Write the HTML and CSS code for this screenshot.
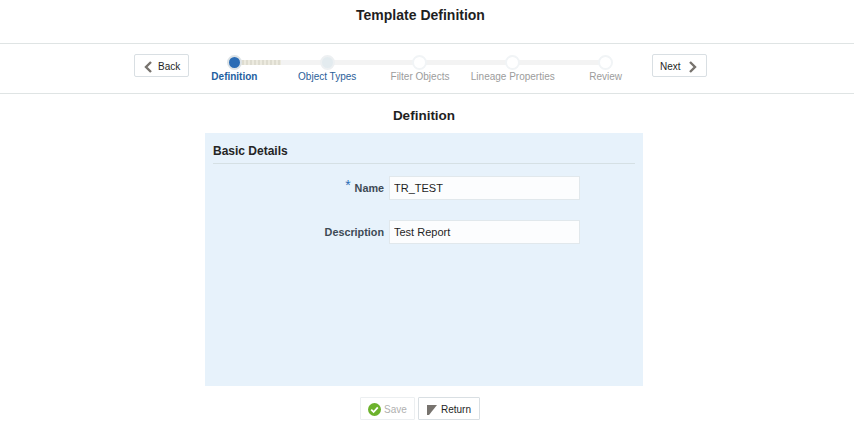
FILE: index.html
```html
<!DOCTYPE html>
<html lang="en">
<head>
    <meta charset="UTF-8">
    <title>Template Definition</title>
    <link rel="stylesheet" href="styles.css">
</head>
<body>
<h1 class="page-title">Template Definition</h1>

<div class="train-bar">
    <button class="nav-btn back-btn">
        <svg width="10" height="12" viewBox="0 0 10 12"><path d="M8 1 L3 6 L8 11" fill="none" stroke="#77736e" stroke-width="2.4"/></svg>
        Back
    </button>
    <div class="train">
        <div class="train-line"></div>
        <div class="train-line-done"></div>
        <div class="step active"><span class="dot"></span><span class="step-label">Definition</span></div>
        <div class="step visited"><span class="dot"></span><span class="step-label">Object Types</span></div>
        <div class="step"><span class="dot"></span><span class="step-label">Filter Objects</span></div>
        <div class="step"><span class="dot"></span><span class="step-label">Lineage Properties</span></div>
        <div class="step"><span class="dot"></span><span class="step-label">Review</span></div>
    </div>
    <button class="nav-btn next-btn">
        Next
        <svg width="10" height="12" viewBox="0 0 10 12"><path d="M2 1 L7 6 L2 11" fill="none" stroke="#77736e" stroke-width="2.4"/></svg>
    </button>
</div>

<h2 class="section-title">Definition</h2>

<div class="panel">
    <h3 class="panel-title">Basic Details</h3>
    <div class="form-row">
        <label class="form-label"><span class="req">*</span> Name</label>
        <input class="form-input" type="text" value="TR_TEST">
    </div>
    <div class="form-row">
        <label class="form-label">Description</label>
        <input class="form-input" type="text" value="Test Report">
    </div>
</div>

<div class="actions">
    <button class="action-btn save-btn">
        <svg width="13" height="13" viewBox="0 0 13 13"><circle cx="6.5" cy="6.5" r="6.5" fill="#6cb22c"/><path d="M3.2 6.6 L5.6 9 L9.8 4.4" fill="none" stroke="#fff" stroke-width="1.8"/></svg>
        Save
    </button>
    <button class="action-btn return-btn">
        <svg width="10" height="10" viewBox="0 0 10 10"><path d="M0 0 H10 L2 10 H0 Z" fill="#77736e"/></svg>
        Return
    </button>
</div>
</body>
</html>
```

FILE: styles.css
```css
* {
    box-sizing: border-box;
}

body {
    margin: 0;
    height: 427px;
    overflow: hidden;
    background-color: #fff;
    color: #1f1f1f;
    font-family: "Liberation Sans", Arial, sans-serif;
}

.page-title {
    margin: 0;
    height: 43px;
    padding-top: 7px;
    padding-right: 13px;
    font-size: 14px;
    line-height: 17px;
    font-weight: bold;
    text-align: center;
}

.train-bar {
    display: flex;
    justify-content: center;
    align-items: flex-start;
    height: 51px;
    padding-top: 10px;
    padding-right: 13px;
    border-top: 1px solid #dfe4e4;
    border-bottom: 1px solid #dfe4e4;
}

.nav-btn {
    display: flex;
    align-items: center;
    height: 23px;
    padding: 2px 0 0;
    background-color: #fff;
    border: 1px solid #d9dfe3;
    border-radius: 2px;
    color: #1f1f1f;
    font-family: inherit;
    font-size: 10px;
}

.back-btn {
    width: 55px;
    padding-left: 8px;
    gap: 5px;
}

.next-btn {
    width: 55px;
    padding-left: 7px;
    gap: 7px;
}

.train {
    position: relative;
    display: flex;
    width: 464px;
    margin: 1px 0 0 -1px;
}

.train-line {
    position: absolute;
    top: 5px;
    left: 46px;
    width: 371px;
    height: 5px;
    background-color: #f3f3f3;
}

/* dithered look of the finished part */
.train-line-done {
    position: absolute;
    top: 5px;
    left: 46px;
    width: 47px;
    height: 5px;
    background: repeating-linear-gradient(90deg, #dedcd0 0, #dedcd0 2px, #eceadf 2px, #eceadf 4px);
}

.step {
    position: relative;
    width: 92.8px;
    display: flex;
    flex-direction: column;
    align-items: center;
    font-size: 10px;
    color: #9c9c9c;
}

.dot {
    width: 15px;
    height: 15px;
    border: 2.5px solid #f1f4f6;
    border-radius: 50%;
    background-color: #fff;
}

.step.active .dot {
    background-color: #2b6cb5;
    border-color: #dde3e6;
}

.step.visited .dot {
    background-color: #e3ebef;
    border-color: #edf0f2;
}

.step-label {
    line-height: 14px;
    white-space: nowrap;
}

.step.active .step-label {
    color: #245f9f;
    font-weight: bold;
}

.step.visited .step-label {
    color: #2a6099;
}

.section-title {
    margin: 0;
    padding-top: 13px;
    padding-right: 6px;
    height: 39px;
    font-size: 13.5px;
    line-height: 17px;
    font-weight: bold;
    text-align: center;
}

.panel {
    width: 438px;
    height: 253px;
    margin-left: 205px;
    padding: 10px 8px 0;
    background-color: #e7f2fb;
}

.panel-title {
    margin: 0 0 12px;
    height: 21px;
    border-bottom: 1px solid #d5e0e4;
    font-size: 12px;
    line-height: 16px;
    font-weight: bold;
    color: #252525;
}

.form-row {
    display: flex;
    align-items: center;
    margin-bottom: 20px;
}

.form-label {
    width: 176px;
    padding-right: 5px;
    font-size: 10.8px;
    font-weight: bold;
    text-align: right;
    color: #3d4a55;
}

.req {
    position: relative;
    top: -2px;
    margin-right: 1px;
    color: #2b6cb5;
    font-size: 14px;
    line-height: 0;
    font-weight: normal;
}

.form-input {
    width: 191px;
    height: 24px;
    padding: 0 4px;
    background-color: #fcfdfe;
    border: 1px solid #e1e8ec;
    color: #1f1f1f;
    font-family: inherit;
    font-size: 11px;
}

.actions {
    display: flex;
    justify-content: center;
    gap: 3px;
    padding-top: 11px;
    padding-right: 14px;
}

.action-btn {
    display: flex;
    align-items: center;
    height: 23px;
    padding: 2px 0 0 7px;
    background-color: #fff;
    border: 1px solid #d9dfe3;
    border-radius: 1px;
    color: #1f1f1f;
    font-family: inherit;
    font-size: 10px;
}

.save-btn {
    width: 55px;
    gap: 3px;
    color: #b0b0b0;
    border-color: #eceff1;
}

.return-btn {
    width: 62px;
    gap: 4px;
    padding-left: 8px;
}
```
